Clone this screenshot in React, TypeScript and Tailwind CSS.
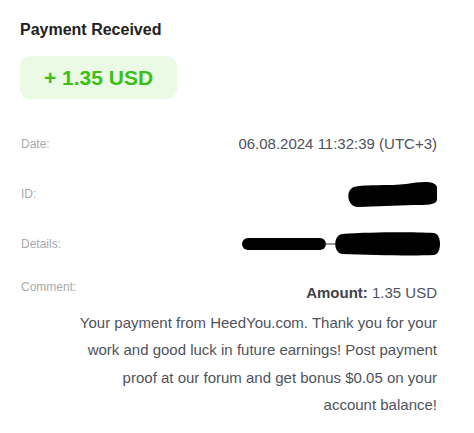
const rows = [
  { label: "Date:", kind: "date" },
  { label: "ID:", kind: "id" },
  { label: "Details:", kind: "details" },
];

const IdBlot = () => (
  <svg width="92" height="26" viewBox="0 0 92 26" className="block">
    <path
      d="M8 6 C 20 3, 45 5, 60 3 C 75 1, 88 -1, 91 6 L 91 19 C 90 24, 80 24, 68 24 L 12 26 C 1 26, -1 9, 8 6 Z"
      fill="#000"
    />
  </svg>
);

const DetailsBlot = () => (
  <svg width="200" height="24" viewBox="0 0 200 24" className="block">
    <rect x="0" y="6" width="84" height="12" rx="6" fill="#000" />
    <line x1="82" y1="12" x2="94" y2="12" stroke="#333" strokeWidth="1" />
    <path
      d="M100 2 C 130 0, 170 0, 192 1 C 200 2, 200 22, 192 23 C 170 24, 130 23, 100 22 C 91 21, 91 3, 100 2 Z"
      fill="#000"
    />
  </svg>
);

export default function App() {
  return (
    <div className="h-[433px] w-[474px] bg-white pl-5 pr-[37px] pt-5 font-['Liberation_Sans',Arial,sans-serif]">
      <h1 className="text-[16px] font-bold leading-5 text-[#222]">
        Payment Received
      </h1>
      <div className="mt-4 flex h-[43px] w-[157px] items-center justify-center rounded-[10px] bg-[#ebfae5] text-[21px] font-bold text-[#3cbf19]">
        + 1.35 USD
      </div>

      <div className="mt-[20px]">
        {rows.map((row) => (
          <div key={row.label} className="flex h-[50px] items-center">
            <span className="w-[55px] pl-[1px] text-[12px] leading-4 text-[#aaa]">
              {row.label}
            </span>
            <div className="flex flex-1 justify-end text-[15px] text-[#4f535b]">
              {row.kind === "date" && "06.08.2024 11:32:39 (UTC+3)"}
              {row.kind === "id" && (
                <span className="mr-[-1px]">
                  <IdBlot />
                </span>
              )}
              {row.kind === "details" && (
                <span className="mr-[-5px]">
                  <DetailsBlot />
                </span>
              )}
            </div>
          </div>
        ))}

        <div className="flex pt-[10px]">
          <span className="w-[55px] shrink-0 pl-[1px] text-[12px] leading-4 text-[#aaa]">
            Comment:
          </span>
          <div className="flex-1 text-right text-[15px] leading-[27.6px] text-[#4f535b]">
            <p className="mb-[2px]">
              <b className="text-[#3f434a]">Amount:</b> 1.35 USD
            </p>
            <p>
              Your payment from HeedYou.com. Thank you for your work and good
              luck in future earnings! Post payment proof at our forum and get
              bonus $0.05 on your account balance!
            </p>
          </div>
        </div>
      </div>
    </div>
  );
}
